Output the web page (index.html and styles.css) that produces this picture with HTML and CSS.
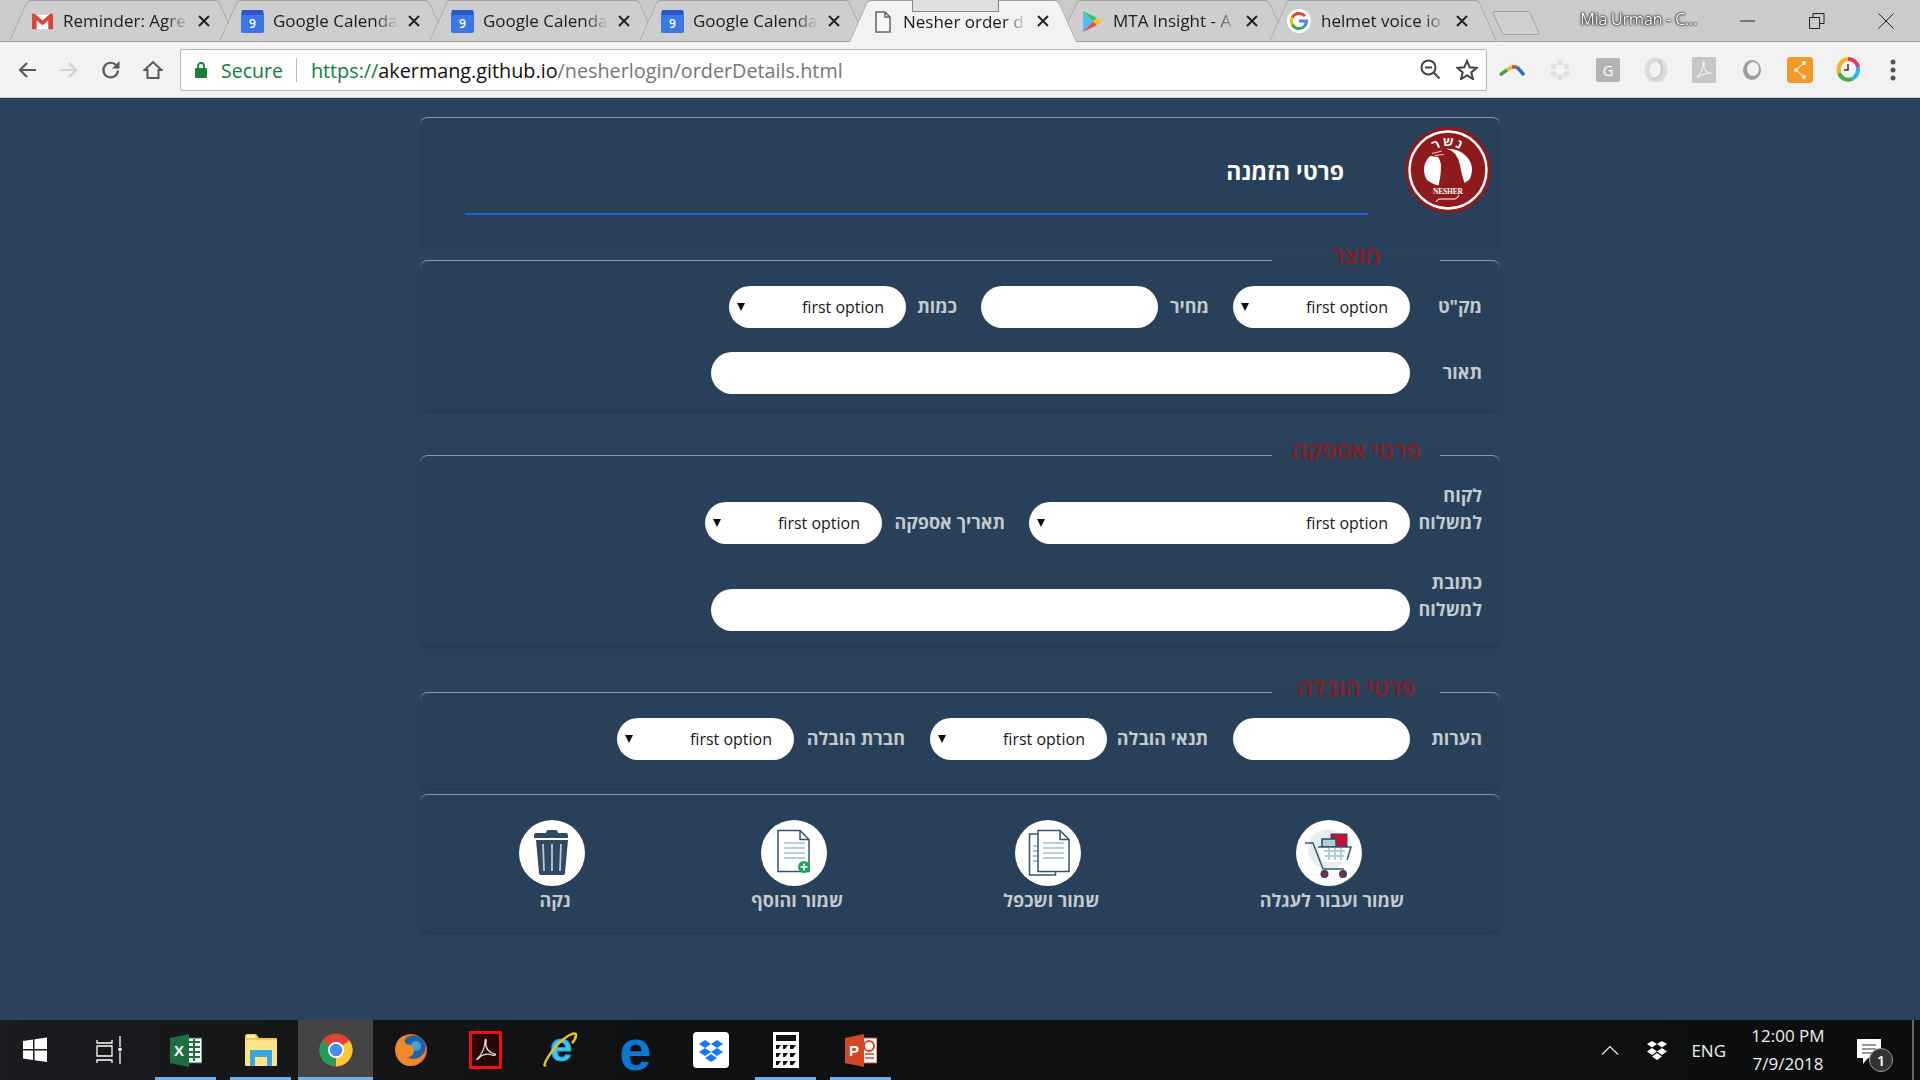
FILE: index.html
```html
<!DOCTYPE html>
<html lang="he">
<head>
  <meta charset="UTF-8">
  <title>Nesher order details</title>
  <link rel="stylesheet" href="styles.css">
</head>
<body>
  <svg class="defs" width="0" height="0">
    <symbol id="cal" viewBox="0 0 23 23">
      <rect y="1" width="23" height="22" rx="2" fill="#3b78e7"/>
      <rect x="1" width="21" height="5" fill="#2a56c6"/>
      <text x="11.5" y="18" text-anchor="middle" font-family="Open Sans" font-size="12" font-weight="600" fill="#fff">9</text>
    </symbol>
    <symbol id="close" viewBox="0 0 12 12">
      <path d="M1 1l10 10M11 1L1 11" stroke="#222" stroke-width="2" fill="none"/>
    </symbol>
  </svg>

  <!-- tabs -->
  <div class="tabstrip">
    <div class="tab">
      <svg class="favicon" width="23" height="23" viewBox="0 0 24 24"><path fill="#fff" d="M2 5h20v15H2z"/><path fill="#d9453a" d="M1 4h3l8 7 8-7h3v16h-5V11l-6 5-6-5v9H1z"/></svg>
      <span class="tab-title">Reminder: Agre</span>
      <svg class="tab-x" width="12" height="12"><use href="#close"/></svg>
    </div>
    <div class="tab">
      <svg class="favicon" width="23" height="23"><use href="#cal"/></svg>
      <span class="tab-title">Google Calenda</span>
      <svg class="tab-x" width="12" height="12"><use href="#close"/></svg>
    </div>
    <div class="tab">
      <svg class="favicon" width="23" height="23"><use href="#cal"/></svg>
      <span class="tab-title">Google Calenda</span>
      <svg class="tab-x" width="12" height="12"><use href="#close"/></svg>
    </div>
    <div class="tab">
      <svg class="favicon" width="23" height="23"><use href="#cal"/></svg>
      <span class="tab-title">Google Calenda</span>
      <svg class="tab-x" width="12" height="12"><use href="#close"/></svg>
    </div>
    <div class="tab tab-active">
      <span class="tab-ghost"></span>
      <svg class="favicon favicon-doc" width="16" height="22" viewBox="0 0 16 22"><path d="M1 1h9l5 5v15H1z" fill="#f7f7f7" stroke="#666" stroke-width="1.5"/><path d="M10 1v5h5" fill="none" stroke="#666" stroke-width="1.5"/></svg>
      <span class="tab-title">Nesher order d</span>
      <svg class="tab-x" width="12" height="12"><use href="#close"/></svg>
    </div>
    <div class="tab tab-mta">
      <svg class="favicon" width="23" height="23" viewBox="0 0 23 23"><path d="M2 1v21l10-10.500z" fill="#4bc3ef"/><path d="M2 1l14 7-4 3.500z" fill="#43b96b"/><path d="M2 22l14-7-4-3.500z" fill="#ea4b55"/><path d="M16 8l6 3.500-6 3.500-4-3.500z" fill="#fbc02d"/></svg>
      <span class="tab-title">MTA Insight - A</span>
      <svg class="tab-x" width="12" height="12"><use href="#close"/></svg>
    </div>
    <div class="tab tab-last">
      <svg class="favicon" width="24" height="24" viewBox="0 0 24 24"><circle cx="12" cy="12" r="12" fill="#fff"/><path d="M18 7a8 8 0 0 0-6-2.500A7.500 7.500 0 0 0 5.300 8.500" fill="none" stroke="#ea4335" stroke-width="3"/><path d="M5.300 8.500a7.500 7.500 0 0 0 0 7" fill="none" stroke="#fbbc05" stroke-width="3"/><path d="M5.300 15.500A7.500 7.500 0 0 0 12 19.500a7.500 7.500 0 0 0 5.500-2.300" fill="none" stroke="#34a853" stroke-width="3"/><path d="M12 12h7.500a7.500 7.500 0 0 1-2 5.200" fill="none" stroke="#4285f4" stroke-width="3"/></svg>
      <span class="tab-title">helmet voice io</span>
      <svg class="tab-x" width="12" height="12"><use href="#close"/></svg>
    </div>
    <div class="new-tab"></div>
    <div class="win-title">Mia Urman - C...</div>
    <div class="win-controls">
      <svg width="16" height="16" viewBox="0 0 16 16"><path d="M0 8h15" stroke="#222" fill="none"/></svg>
      <svg width="16" height="16" viewBox="0 0 16 16"><path d="M.5 4.500h10v11H.5zM4 4.500V.5h11v10h-4.500" stroke="#222" fill="none"/></svg>
      <svg width="16" height="16" viewBox="0 0 16 16"><path d="M.5.500l15 15M15.500.500l-15 15" stroke="#222" fill="none"/></svg>
    </div>
  </div>

  <!-- address bar -->
  <div class="toolbar">
    <div class="nav">
      <svg width="20" height="20" viewBox="0 0 20 20"><path d="M19 10H3M10 3l-7 7 7 7" fill="none" stroke="#5a5a5a" stroke-width="2.200"/></svg>
      <svg width="20" height="20" viewBox="0 0 20 20"><path d="M1 10h16M10 3l7 7-7 7" fill="none" stroke="#d4d4d4" stroke-width="2.200"/></svg>
      <svg width="20" height="20" viewBox="0 0 20 20"><path d="M17 10.500a7.300 7.300 0 1 1-2-5.500" fill="none" stroke="#5a5a5a" stroke-width="2.200"/><path d="M18.500 1v7.500H11z" fill="#5a5a5a"/></svg>
      <svg width="20" height="20" viewBox="0 0 20 20"><path d="M1.500 10L10 2l8.500 8H15.500v8h-11v-8z" fill="none" stroke="#5a5a5a" stroke-width="2"/></svg>
    </div>
    <div class="omnibox">
      <svg width="12" height="16" viewBox="0 0 12 16"><rect y="6" width="12" height="10" rx="1" fill="#188038"/><path d="M3 7V4a3 3 0 0 1 6 0v3" fill="none" stroke="#188038" stroke-width="1.800"/></svg>
      <span class="secure">Secure</span>
      <span class="omni-sep"></span>
      <span class="url"><span class="url-scheme">https://</span>akermang.github.io<span class="url-path">/nesherlogin/orderDetails.html</span></span>
      <span class="omni-icons">
        <svg width="21" height="21" viewBox="0 0 21 21"><circle cx="8.500" cy="8.500" r="7" fill="none" stroke="#444" stroke-width="2"/><path d="M5 8.500h7M13.500 13.500l6 6" stroke="#444" stroke-width="2" fill="none"/></svg>
        <svg width="22" height="21" viewBox="0 0 22 21"><path d="M11 2l2.700 6.300 6.800.600-5.200 4.500 1.600 6.600L11 16.500 5.100 20l1.600-6.600L1.500 8.900l6.800-.600z" fill="none" stroke="#444" stroke-width="2"/></svg>
      </span>
    </div>
    <div class="extensions">
      <svg width="26" height="12" viewBox="0 0 26 12"><path d="M1 11l7-5" stroke="#4a9c3f" stroke-width="3.500"/><path d="M8 6l5-3" stroke="#e8b92a" stroke-width="3.500"/><path d="M13 3l5 0" stroke="#d8502b" stroke-width="3.500"/><path d="M18 3l7 8" stroke="#2a6fc9" stroke-width="3.500"/></svg>
      <svg width="22" height="22" viewBox="0 0 22 22" fill="#dfe3e6"><circle cx="11" cy="4" r="3"/><circle cx="11" cy="18" r="3"/><circle cx="4.500" cy="7.500" r="3"/><circle cx="17.500" cy="7.500" r="3"/><circle cx="4.500" cy="14.500" r="3"/><circle cx="17.500" cy="14.500" r="3"/></svg>
      <span class="ext-g">G</span>
      <svg width="24" height="26" viewBox="0 0 24 26"><ellipse cx="12" cy="13" rx="9" ry="10" fill="none" stroke="#dcdcdc" stroke-width="5"/><path d="M8 22c6 0 10-4 10-10 0-4-2-7-4-9" fill="none" stroke="#c8c8c8" stroke-width="2"/></svg>
      <svg width="24" height="26" viewBox="0 0 24 26"><rect width="24" height="26" fill="#c6c6c6"/><path d="M5 20c4-3 6-9 6-14 0-3 2-1 1 2-1 4 3 8 7 8 2 0-6 0-9 2-3 1-4 3-5 2z" fill="none" stroke="#eee" stroke-width="1.200"/></svg>
      <svg width="22" height="24" viewBox="0 0 22 24"><ellipse cx="11" cy="12" rx="9" ry="10" fill="#9e9e9e"/><ellipse cx="12" cy="11" rx="6" ry="7" fill="#f1f1f1"/></svg>
      <svg width="26" height="26" viewBox="0 0 26 26"><rect width="26" height="26" rx="3" fill="#f39a26"/><path d="M17 6l-8 7 8 7" fill="none" stroke="#fff" stroke-width="1"/><circle cx="17" cy="6" r="2" fill="#fff"/><circle cx="9" cy="13" r="2" fill="#fff"/><circle cx="17" cy="20" r="2" fill="#fff"/></svg>
      <svg width="26" height="28" viewBox="0 0 26 28"><path d="M13 3a10 11 0 0 1 10 8" fill="none" stroke="#e8336d" stroke-width="4"/><path d="M23 11a10 11 0 0 1-6 12" fill="none" stroke="#2ab4e8" stroke-width="4"/><path d="M17 23a10 11 0 0 1-13-6" fill="none" stroke="#49a942" stroke-width="4"/><path d="M4 17a10 11 0 0 1 9-14" fill="none" stroke="#f4b41f" stroke-width="4"/><path d="M13 8v6h-4" fill="none" stroke="#333" stroke-width="1.500"/></svg>
      <svg class="ext-menu" width="6" height="22" viewBox="0 0 6 22" fill="#555"><circle cx="3" cy="3" r="2.500"/><circle cx="3" cy="11" r="2.500"/><circle cx="3" cy="19" r="2.500"/></svg>
    </div>
  </div>

  <!-- page -->
  <main class="page">
    <div class="card" dir="rtl">
      <header class="head">
        <svg class="logo" width="86" height="86" viewBox="0 0 86 86">
          <circle cx="43" cy="43" r="43" fill="#8f1a1c"/>
          <circle cx="43" cy="43" r="38.500" fill="none" stroke="#fff" stroke-width="2.500"/>
          <path d="M22 53a24 21 0 1 1 42 0q-9 7-21 7t-21-7z" fill="#fff"/>
          <path d="M25 27q8-6 17-5 10 2 13 16 2 12 5 19-8 5-17 5-7 0-10-2 3-10 3-22 -1-6-3-8l-8-1z" fill="#8f1a1c"/>
          <path d="M27 26.500l10-2.500M30 28.500l9-1" stroke="#fff" fill="none" stroke-width=".8"/>
          <path id="arc" d="M22 31.400a24 24 0 0 1 42 0" fill="none"/>
          <text font-family="Liberation Sans" font-size="13" font-weight="bold" letter-spacing="2" fill="#fff" text-anchor="middle" direction="rtl"><textPath href="#arc" startOffset="50%">נשר</textPath></text>
          <text x="43" y="67" text-anchor="middle" font-family="Liberation Serif" font-size="7.500" font-weight="bold" fill="#fff" dir="ltr" textLength="30">NESHER</text>
          <path d="M31 75q2-4 5-3h14q2 0 4-4" fill="none" stroke="#fff"/>
        </svg>
        <div class="head-main">
          <h1 class="title">פרטי הזמנה</h1>
        </div>
      </header>

      <fieldset class="group">
        <legend><span>מוצר</span></legend>
        <div class="row">
          <label class="lbl">מק"ט</label>
          <div class="select"><select><option>first option</option></select></div>
          <label class="lbl lbl-sm">מחיר</label>
          <input class="ctl" type="text">
          <label class="lbl lbl-sm">כמות</label>
          <div class="select"><select><option>first option</option></select></div>
        </div>
        <div class="row">
          <label class="lbl">תאור</label>
          <input class="ctl ctl-full" type="text">
        </div>
      </fieldset>

      <fieldset class="group group-supply">
        <legend><span>פרטי אספקה</span></legend>
        <div class="row">
          <label class="lbl">לקוח למשלוח</label>
          <div class="select select-wide"><select><option>first option</option></select></div>
          <label class="lbl lbl-xl">תאריך אספקה</label>
          <div class="select"><select><option>first option</option></select></div>
        </div>
        <div class="row">
          <label class="lbl">כתובת למשלוח</label>
          <input class="ctl ctl-full" type="text">
        </div>
      </fieldset>

      <fieldset class="group group-delivery">
        <legend><span>פרטי הובלה</span></legend>
        <div class="row">
          <label class="lbl">הערות</label>
          <input class="ctl" type="text">
          <label class="lbl lbl-md">תנאי הובלה</label>
          <div class="select"><select><option>first option</option></select></div>
          <label class="lbl lbl-lg">חברת הובלה</label>
          <div class="select"><select><option>first option</option></select></div>
        </div>
      </fieldset>

      <section class="actions">
        <div class="action">
          <svg class="action-icon" width="66" height="66" viewBox="0 0 66 66">
            <circle cx="33" cy="33" r="33" fill="#fff"/>
            <circle cx="32" cy="29" r="20" fill="#e9edf0"/>
            <rect x="35" y="14" width="16" height="13" fill="#c8102e" stroke="#2a4a60"/>
            <rect x="26" y="19" width="14" height="8" fill="#b5d0d5" stroke="#2a4a60" stroke-width="1.500"/>
            <path d="M22 27h34l-4 15H26z" fill="#fff"/>
            <path d="M9 23h8l10 26h21M22 27h33l-4 13" fill="none" stroke="#2f5870" stroke-width="1.500"/>
            <path d="M28 31h21M29 36h19M33 28v12M39 28v12M45 28v12" stroke="#a9cdd2" stroke-width="1.800" fill="none"/>
            <circle cx="28.500" cy="54" r="3" fill="#c8102e" stroke="#2a4a60" stroke-width="2"/>
            <circle cx="47" cy="54" r="3" fill="#c8102e" stroke="#2a4a60" stroke-width="2"/>
          </svg>
          <span class="action-label">שמור ועבור לעגלה</span>
        </div>
        <div class="action">
          <svg class="action-icon" width="66" height="66" viewBox="0 0 66 66">
            <circle cx="33" cy="33" r="33" fill="#fff"/>
            <path d="M14.500 14h26v41h-26z" fill="#fff" stroke="#2f5870" stroke-width="1.500"/>
            <path d="M18 26h5M18 31h5M18 36h5M18 41h5" stroke="#a9c5ca" stroke-width="2"/>
            <path d="M23 10.500h22l9 9v32H23z" fill="#fff" stroke="#2f5870" stroke-width="1.500"/>
            <path d="M45 10.500v9h9" fill="none" stroke="#2f5870" stroke-width="1.500"/>
            <path d="M28 23h21M28 28h21M28 33h21M28 38h21" stroke="#b5cfd3" stroke-width="2.200"/>
          </svg>
          <span class="action-label">שמור ושכפל</span>
        </div>
        <div class="action">
          <svg class="action-icon" width="66" height="66" viewBox="0 0 66 66">
            <circle cx="33" cy="33" r="33" fill="#fff"/>
            <path d="M17 10.500h22l9 9v32H17z" fill="#fff" stroke="#2f5870" stroke-width="1.500"/>
            <path d="M39 10.500v9h9" fill="none" stroke="#2f5870" stroke-width="1.500"/>
            <path d="M23 23h21M23 28h21M23 33h21M23 38h21" stroke="#b5cfd3" stroke-width="2.200"/>
            <circle cx="43" cy="47" r="6" fill="#14a85a"/>
            <path d="M39.500 47h7M43 43.500v7" stroke="#fff" stroke-width="1.600"/>
          </svg>
          <span class="action-label">שמור והוסף</span>
        </div>
        <div class="action action-clear">
          <svg class="action-icon" width="66" height="66" viewBox="0 0 66 66">
            <circle cx="33" cy="33" r="33" fill="#fff"/>
            <path d="M27 13q0-3 3-3h6q3 0 3 3h8q2 0 2 3v2H15v-2q0-3 2-3z" fill="#2f4a62"/>
            <path d="M17 20h32l-3 33q0 2-3 2H23q-3 0-3-2z" fill="#2f4a62"/>
            <path d="M24 24l1 27M33 24v27M42 24l-1 27" stroke="#b8c8cf" stroke-width="1.800"/>
          </svg>
          <span class="action-label">נקה</span>
        </div>
      </section>
    </div>
  </main>

  <!-- windows taskbar -->
  <footer class="taskbar">
    <div class="tb-cell tb-start">
      <svg width="26" height="30" viewBox="0 0 26 30" fill="#fff"><path d="M1 6l10-1.500V14H1zM12.500 4.300L25 2.500V14H12.500zM1 15.500h10v9.500L1 23.500zM12.500 15.500H25V27l-12.500-1.800z"/></svg>
    </div>
    <div class="tb-cell tb-view">
      <svg width="26" height="30" viewBox="0 0 26 30" fill="none" stroke="#fff" stroke-width="1.300"><path d="M1 5v3h15V5M1 11h15v10H1zM1 28v-3h15v3M24 1v11M24 17v12"/><rect x="23" y="13.500" width="2" height="2" fill="#fff"/></svg>
    </div>
    <div class="tb-cell tb-open">
      <svg width="32" height="33" viewBox="0 0 32 33"><rect x="13" y="4" width="19" height="25" fill="#fff" stroke="#1e6e42"/><path d="M18 8h12M18 13h12M18 18h12M18 23h12M24 5v22" stroke="#1e6e42" stroke-width="2"/><path d="M0 4l19-4v33L0 29z" fill="#1e6e42"/><text x="9" y="22" text-anchor="middle" font-family="Liberation Sans" font-weight="bold" font-size="15" fill="#fff">X</text></svg>
    </div>
    <div class="tb-cell tb-open">
      <svg width="32" height="32" viewBox="0 0 32 32"><path d="M0 2q0-2 2-2h9l3 4h17q1 0 1 1v2H0z" fill="#f0c94e"/><rect x="2" y="1.500" width="8" height="2" fill="#fff"/><rect y="6" width="32" height="26" rx="1" fill="#ffe38a"/><path d="M5 16h22v16h-5v-9H10v9H5z" fill="#3aa7de"/></svg>
    </div>
    <div class="tb-cell tb-open tb-active">
      <svg width="34" height="34" viewBox="0 0 34 34"><circle cx="17" cy="17" r="16.500" fill="#db4437"/><path d="M17 17L30.500 7.500A16.500 16.500 0 0 1 17 33.500z" fill="#fcc934"/><path d="M17 17l-1 16.500A16.500 16.500 0 0 1 3 8z" fill="#1e9e57"/><circle cx="17" cy="17" r="8" fill="#fff"/><circle cx="17" cy="17" r="6.300" fill="#4a8cf0"/></svg>
    </div>
    <div class="tb-cell">
      <svg width="34" height="34" viewBox="0 0 34 34"><circle cx="17" cy="17" r="16" fill="#e8642a"/><circle cx="20" cy="14" r="11.500" fill="#1b63a8"/><circle cx="22" cy="13" r="5" fill="#3fa3d8"/><path d="M2 12c1-5 5-9 11-10-3 3-3 6-1 9 5 0 8 3 8 6 0 5-4 8-9 7 6 5 15 3 21-6-2 10-9 15-16 15C6 33 0 23 2 12z" fill="#f08a28"/></svg>
    </div>
    <div class="tb-cell">
      <svg width="33" height="38" viewBox="0 0 33 38"><rect x="1.500" y="1.500" width="30" height="35" fill="#2a0505" stroke="#ee1111" stroke-width="3"/><path d="M8 28c5-4 8-12 8-18 0-3 2-2 1 2-1 5 3 10 9 11 2 1-1 2-3 1-5-2-11 0-13 3-1 1-3 2-2 1z" fill="none" stroke="#ddd" stroke-width="1.200"/></svg>
    </div>
    <div class="tb-cell">
      <svg width="35" height="36" viewBox="0 0 35 36"><text x="18" y="29" text-anchor="middle" font-family="Liberation Sans" font-weight="bold" font-size="40" fill="#3fc4f0" stroke="#1f9fd8" stroke-width=".8">e</text><path d="M3 33C-1 36 3 26 14 13 24 3 33-1 33 3c0 2-1 5-4 8" fill="none" stroke="#e8c21e" stroke-width="2.500"/></svg>
    </div>
    <div class="tb-cell">
      <span class="edge-e">e</span>
    </div>
    <div class="tb-cell">
      <svg width="36" height="36" viewBox="0 0 36 36"><rect width="36" height="36" rx="4" fill="#fff"/><path d="M12 8l6 4-6 4-6-4zM24 8l6 4-6 4-6-4zM12 16l6 4-6 4-6-4zM24 16l6 4-6 4-6-4zM18 22l6 4-6 4-6-4z" fill="#1678f5"/></svg>
    </div>
    <div class="tb-cell tb-open">
      <svg width="26" height="36" viewBox="0 0 26 36"><rect width="26" height="36" fill="#fff"/><rect x="3" y="3" width="20" height="6" fill="#111"/><path d="M3 13h5l-3 4H3zM10 13h5l-3 4h-2zM17 13h6l-3 4h-3zM3 21h5l-3 4H3zM10 21h5l-3 4h-2zM17 21h6l-3 4h-3zM3 29h5l-3 4H3zM10 29h5l-3 4h-2zM17 29h6l-3 4h-3z" fill="#111"/></svg>
    </div>
    <div class="tb-cell tb-open">
      <svg width="32" height="33" viewBox="0 0 32 33"><rect x="13" y="4" width="19" height="25" fill="#fff" stroke="#d24726"/><path d="M20 20h9M20 24h9" stroke="#d24726" stroke-width="1.500"/><circle cx="24" cy="12" r="5" fill="none" stroke="#d24726" stroke-width="2"/><path d="M0 4l19-4v33L0 29z" fill="#d24726"/><text x="9" y="22" text-anchor="middle" font-family="Liberation Sans" font-weight="bold" font-size="15" fill="#fff">P</text></svg>
    </div>

    <div class="tray">
      <svg width="18" height="10" viewBox="0 0 18 10"><path d="M1 9.500l8-8 8 8" fill="none" stroke="#eee" stroke-width="1.200"/></svg>
      <svg class="tray-box" width="22" height="20" viewBox="0 0 22 20" fill="#fff"><path d="M6 1l5 3-5 3.500L1 4zM16 1l5 3-5 3.500L11 4zM6 8l5 3.500L6 15l-5-3.500zM16 8l5 3.500-5 3.500-5-3.500zM11 13l5 3.500-5 3.500-5-3.500z"/></svg>
      <span class="tray-lang">ENG</span>
      <div class="clock"><span>12:00 PM</span><span>7/9/2018</span></div>
      <div class="notif">
        <svg width="25" height="25" viewBox="0 0 25 25"><path d="M0 0h24v19H11l-5 6v-6H0z" fill="#fff"/><path d="M5 6h14M5 10h14M5 14h10" stroke="#333"/></svg>
        <span class="notif-badge">1</span>
      </div>
      <span class="show-desktop"></span>
    </div>
  </footer>
</body>
</html>
```

FILE: styles.css
```css
html, body {
  margin: 0;
  height: 100%;
}
body {
  width: 1920px;
  height: 1080px;
  overflow: hidden;
  display: flex;
  flex-direction: column;
  font-family: "Open Sans", "DejaVu Sans", sans-serif;
  background-color: #2a425c;
}
.defs {
  position: absolute;
}

/* tabs */
.tabstrip {
  height: 42px;
  flex: none;
  display: flex;
  padding-left: 9px;
  box-sizing: border-box;
  background-color: #cbcbcb;
  border-bottom: 1px solid #a3a3a3;
}
.tab {
  position: relative;
  width: 228px;
  height: 41px;
  flex: none;
  margin-right: -18px;
  padding-left: 22px;
  box-sizing: border-box;
  display: flex;
  align-items: center;
  isolation: isolate;
}
.tab::before, .tab::after {
  content: "";
  position: absolute;
  top: 0;
  bottom: 0;
  width: 55%;
  background-color: #cecece;
  border-top: 1px solid #a0a0a0;
  z-index: -1;
}
.tab::before {
  left: 0;
  border-left: 1px solid #a0a0a0;
  border-top-left-radius: 4px;
  transform: skewX(-24deg);
  transform-origin: bottom left;
}
.tab::after {
  right: 0;
  border-right: 1px solid #a0a0a0;
  border-top-right-radius: 4px;
  transform: skewX(24deg);
  transform-origin: bottom right;
}
.tab-active {
  z-index: 2;
  height: 42px;
}
.tab-active::before, .tab-active::after {
  background-color: #f2f2f2;
}
.tab-ghost {
  position: absolute;
  top: 0;
  left: 63px;
  width: 85px;
  height: 11px;
  background-color: #e0e0e0;
  border: 1px solid #888;
  border-top: 0;
}
.favicon {
  flex: none;
  margin-right: 9px;
  margin-top: 1px;
}
.favicon-doc {
  margin-left: 4px;
  margin-right: 12px;
}
.tab-last .favicon {
  margin-left: -4px;
  margin-right: 10px;
}
.tab-title {
  width: 125px;
  flex: none;
  white-space: nowrap;
  font-size: 17px;
  color: #1c1c1c;
  -webkit-mask-image: linear-gradient(to right, #000 82%, transparent 100%);
  mask-image: linear-gradient(to right, #000 82%, transparent 100%);
}
.tab-active .tab-title {
  width: 124px;
}
.tab-mta .tab-title {
  width: 123px;
}
.tab-x {
  flex: none;
  margin-left: 10px;
}
.new-tab {
  width: 36px;
  height: 22px;
  margin: 11px 0 0 18px;
  flex: none;
  border: 1px solid #a5a5a5;
  border-radius: 3px;
  background-color: #cfcfcf;
  transform: skewX(24deg);
}
.win-title {
  margin: 7px 0 0 45px;
  width: 169px;
  flex: none;
  font-size: 16.500px;
  letter-spacing: -0.4px;
  color: #fff;
  text-shadow: 0 0 3px #000, 0 0 1px #000, 0 0 1px #000;
}
.win-controls {
  display: flex;
  gap: 53px;
  margin-left: -9px;
  padding-top: 13px;
}

/* address bar */
.toolbar {
  height: 56px;
  flex: none;
  display: flex;
  align-items: center;
  box-sizing: border-box;
  padding-left: 17px;
  background-color: #f2f2f2;
  border-bottom: 1px solid #cfcfcf;
}
.nav {
  display: flex;
  gap: 22px;
  width: 163px;
  flex: none;
}
.omnibox {
  width: 1307px;
  height: 42px;
  flex: none;
  display: flex;
  align-items: center;
  box-sizing: border-box;
  padding: 0 8px 0 14px;
  background-color: #fff;
  border: 1px solid #b5b5b5;
  border-radius: 2px;
}
.secure {
  margin-left: 14px;
  padding-top: 2px;
  font-size: 19.500px;
  color: #0b8043;
}
.omni-sep {
  width: 1px;
  height: 24px;
  margin: 0 14px 0 13px;
  background-color: #b9b9b9;
}
.url {
  padding-top: 2px;
  font-size: 19.800px;
  color: #111;
}
.url-scheme {
  color: #0b8043;
}
.url-path {
  color: #777;
}
.omni-icons {
  margin-left: auto;
  display: flex;
  align-items: center;
  gap: 15px;
}
.extensions {
  display: grid;
  grid-template-columns: repeat(9, 48px);
  justify-items: center;
  align-items: center;
  padding-left: 1px;
}
.ext-g {
  width: 24px;
  height: 24px;
  background-color: #b3b3b3;
  color: #fff;
  font-size: 15px;
  line-height: 24px;
  text-align: center;
  border-radius: 2px;
}
.ext-menu {
  margin-right: 6px;
}

/* page */
.page {
  flex: 1;
  padding-top: 19px;
}
.card {
  width: 1080px;
  margin: 0 auto;
}
.head {
  height: 131px;
  box-sizing: border-box;
  display: flex;
  align-items: flex-start;
  border-top: 1px solid #8d99a6;
  border-radius: 8px 8px 0 0;
  background-color: #29405a;
}
.logo {
  flex: none;
  margin: 9px 9px 0 0;
}
.head-main {
  width: 903px;
  margin-right: 37px;
  padding: 38px 24px 27px 0;
  box-sizing: border-box;
  border-bottom: 2px solid #1c5ee0;
}
.title {
  margin: 0;
  font-size: 23px;
  font-weight: 700;
  line-height: 30px;
  color: #fff;
}
.group {
  margin: 0;
  padding: 14px 0 16px;
  min-width: 0;
  border: 0;
  border-top: 1px solid #8d99a6;
  border-radius: 8px;
  background-color: #29405a;
  box-shadow: 0 2px 3px rgba(0, 0, 0, 0.12);
  display: flex;
  flex-direction: column;
  gap: 24px;
}
.group legend {
  width: 168px;
  height: 24px;
  margin-left: auto;
  margin-right: 60px;
  padding: 0;
  text-align: center;
}
.group legend span {
  display: block;
  height: 18px;
  line-height: 14px;
  overflow: hidden;
  font-size: 24px;
  font-weight: 600;
  color: #8e1b1f;
}
.group-supply {
  margin-top: 33px;
  padding: 15px 0;
  gap: 25px;
}
.group-delivery {
  margin-top: 34px;
  padding: 14px 0 28px;
}
.row {
  display: flex;
  align-items: flex-end;
  padding-right: 18px;
}
.lbl {
  width: 72px;
  flex: none;
  padding-bottom: 8px;
  box-sizing: border-box;
  font-size: 18px;
  font-weight: 700;
  line-height: 27px;
  color: #c3cad0;
}
.lbl-sm {
  width: 51px;
  margin-right: 24px;
}
.lbl-md {
  width: 101px;
  margin-right: 25px;
}
.lbl-lg {
  width: 111px;
  margin-right: 25px;
}
.lbl-xl {
  width: 123px;
  margin-right: 24px;
}
.ctl, .select select {
  height: 42px;
  box-sizing: border-box;
  border: 0;
  border-radius: 21px;
  background-color: #fff;
  outline: none;
}
.ctl {
  width: 177px;
  flex: none;
}
.ctl-full {
  width: 699px;
}
.select {
  position: relative;
  width: 177px;
  flex: none;
}
.select-wide {
  width: 381px;
}
.select select {
  width: 100%;
  display: block;
  appearance: none;
  -webkit-appearance: none;
  padding: 0 22px 1px 0;
  font-family: "Open Sans", sans-serif;
  font-size: 16px;
  color: #1a1a1a;
}
.select::after {
  content: "";
  position: absolute;
  left: 8px;
  top: 17px;
  border-top: 8px solid #111;
  border-left: 4px solid transparent;
  border-right: 4px solid transparent;
}
.actions {
  margin-top: 6px;
  height: 138px;
  box-sizing: border-box;
  padding: 25px 96px 0 99px;
  display: flex;
  justify-content: space-between;
  border-top: 1px solid #8d99a6;
  border-radius: 8px;
  background-color: #29405a;
  box-shadow: 0 2px 3px rgba(0, 0, 0, 0.12);
}
.action {
  display: flex;
  flex-direction: column;
  align-items: center;
}
.action-icon {
  display: block;
  margin-right: 6px;
}
.action-label {
  font-size: 18px;
  font-weight: 700;
  line-height: 28px;
  color: #c3cad0;
}

/* windows taskbar */
.taskbar {
  height: 60px;
  flex: none;
  display: flex;
  background: linear-gradient(to right, #191b1e, #0e1011 35%, #0d0e0f);
}
.tb-cell {
  position: relative;
  width: 75px;
  flex: none;
  display: flex;
  align-items: center;
  justify-content: center;
}
.tb-start {
  width: 70px;
}
.tb-view {
  width: 78px;
}
.tb-open::after {
  content: "";
  position: absolute;
  left: 7px;
  right: 7px;
  bottom: 0;
  height: 3px;
  background-color: #6cb1ea;
}
.tb-active {
  background-color: #444;
}
.tb-active::after {
  left: 0;
  right: 0;
}
.edge-e {
  font-family: "Liberation Sans", sans-serif;
  font-size: 58px;
  font-weight: 700;
  line-height: 60px;
  color: #0a78d7;
}
.tray {
  margin-left: auto;
  display: flex;
  align-items: center;
  color: #eee;
}
.tray-box {
  margin-left: 27px;
}
.tray-lang {
  margin-left: 23px;
  font-size: 17px;
}
.clock {
  width: 80px;
  margin-left: 22px;
  display: flex;
  flex-direction: column;
  align-items: center;
  gap: 6px;
  font-size: 17px;
  line-height: 22px;
}
.notif {
  position: relative;
  width: 38px;
  height: 38px;
  margin-left: 29px;
  padding-top: 8px;
  box-sizing: border-box;
}
.notif-badge {
  position: absolute;
  left: 12px;
  top: 17px;
  width: 22px;
  height: 22px;
  border-radius: 50%;
  border: 1px solid #999;
  background-color: #333;
  color: #fff;
  font-size: 15px;
  font-weight: 600;
  line-height: 22px;
  text-align: center;
}
.show-desktop {
  width: 2px;
  height: 60px;
  margin-left: 17px;
  margin-right: 6px;
  background-color: #666;
}
```
